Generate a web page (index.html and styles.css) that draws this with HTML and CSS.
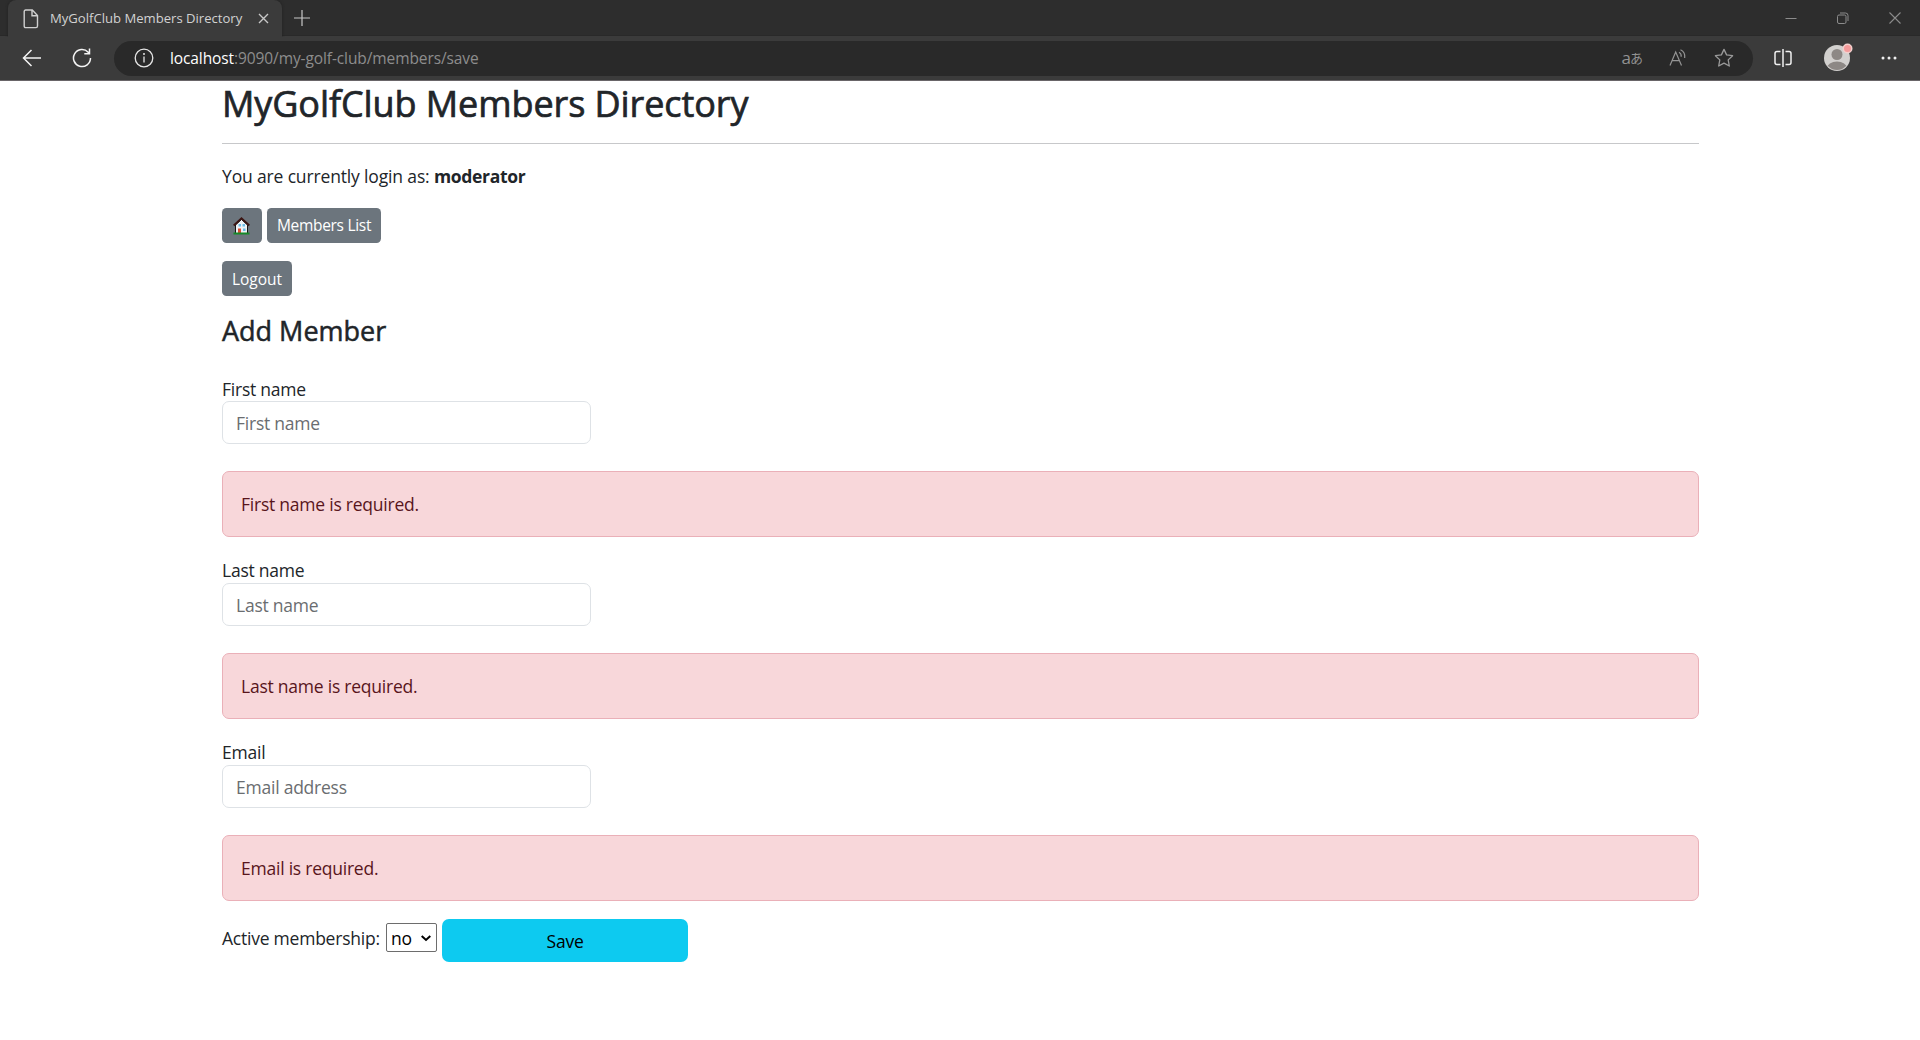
FILE: index.html
```html
<!DOCTYPE html>
<html lang="en">
<head>
<meta charset="utf-8">
<title>MyGolfClub Members Directory</title>
<link rel="stylesheet" href="styles.css">
</head>
<body>
<header class="browser">
  <div class="tabstrip">
    <div class="tab">
      <svg class="page-icon" width="16" height="20" viewBox="0 0 16 20" fill="none" stroke="#d0d0d0" stroke-width="1.4"><path d="M2.7 1H9.3L14.5 6.5V17Q14.5 18.6 12.9 18.6H2.7Q1.2 18.6 1.2 17V2.600Q1.200 1 2.700 1ZM9 1V6.800H14.500"/></svg>
      <span class="tab-title">MyGolfClub Members Directory</span>
      <svg class="tab-close" width="11" height="11" viewBox="0 0 11 11" stroke="#c8c8c8" stroke-width="1.400"><path d="M1 1L10 10M10 1L1 10"/></svg>
    </div>
    <svg class="new-tab" width="16" height="16" viewBox="0 0 16 16" stroke="#c8c8c8" stroke-width="1.200"><path d="M8 0V16M0 8H16"/></svg>
    <div class="window-buttons">
      <svg width="12" height="12" viewBox="0 0 12 12" stroke="#8c8c8c"><path d="M0.500 6.500H11.500"/></svg>
      <svg width="12" height="12" viewBox="0 0 12 12" fill="none" stroke="#8c8c8c"><rect x="0.500" y="3" width="8.500" height="8.500" rx="1.500"/><path d="M3 1H8.500Q11 1 11 3.500V9"/></svg>
      <svg width="12" height="12" viewBox="0 0 12 12" stroke="#8c8c8c" stroke-width="1.100"><path d="M0.500 0.500L11.500 11.500M11.500 0.500L0.500 11.500"/></svg>
    </div>
  </div>
  <div class="toolbar">
    <svg class="back" width="20" height="18" viewBox="0 0 20 18" fill="none" stroke="#f4f4f4" stroke-width="1.500"><path d="M19 9H1.500M9.500 1L1.500 9L9.500 17"/></svg>
    <svg class="reload" width="20" height="20" viewBox="0 0 20 20" fill="none" stroke="#f4f4f4" stroke-width="1.500"><path d="M18.500 10A8.500 8.500 0 1 1 16.200 4.200L17.300 5.500M17.500 0.500V5.700H12.300"/></svg>
    <div class="address">
      <svg class="info" width="20" height="20" viewBox="0 0 20 20" fill="none" stroke="#e6e6e6" stroke-width="1.300"><circle cx="10" cy="10" r="8.800"/><path d="M10 8.500V14.500"/><circle cx="10" cy="6" r=".4"/></svg>
      <span class="url"><span class="host">localhost</span>:9090/my-golf-club/members/save</span>
      <span class="translate">a<span class="kana">あ</span></span>
      <svg class="read" width="18" height="18" viewBox="0 0 18 18" fill="none" stroke="#949494" stroke-width="1.200"><path d="M1 16.500L6.700 3L12.500 16.500M3 11.700H10.500M10 3.200Q12.500 4.500 12.200 7.800M11.500 0.800Q16.500 3 15.700 9"/></svg>
      <svg class="star" width="20" height="20" viewBox="0 0 20 20" fill="none" stroke="#9a9a9a" stroke-width="1.300" stroke-linejoin="round"><path d="M10 1.400L12.600 6.900L18.600 7.700L14.200 11.900L15.300 18L10 15.100L4.700 18L5.800 11.900L1.400 7.700L7.400 6.900Z"/></svg>
    </div>
    <svg class="split" width="18" height="18" viewBox="0 0 18 18" fill="none" stroke="#f0f0f0" stroke-width="1.500"><path d="M9 0V18M6.500 2.500H3Q1 2.500 1 4.500V13.500Q1 15.500 3 15.500H6.500M11.500 2.500H15Q17 2.500 17 4.500V13.500Q17 15.500 15 15.500H11.500"/></svg>
    <svg class="avatar" width="29" height="28" viewBox="0 0 29 28"><defs><clipPath id="face"><circle cx="13" cy="15" r="12"/></clipPath></defs><circle cx="13" cy="15" r="13" fill="#d2d0ce"/><g clip-path="url(#face)" fill="#8d8885"><circle cx="13" cy="11.500" r="5.500"/><ellipse cx="13" cy="25" rx="10" ry="6.500"/></g><circle cx="23.500" cy="5.500" r="5" fill="#f3d0cd"/><circle cx="23.500" cy="5.500" r="3.500" fill="#f59a9a"/></svg>
    <svg class="dots" width="16" height="4" viewBox="0 0 16 4" fill="#f0f0f0"><circle cx="2" cy="2" r="1.500"/><circle cx="8" cy="2" r="1.500"/><circle cx="14" cy="2" r="1.500"/></svg>
  </div>
</header>
<main class="container">
  <h2 class="title">MyGolfClub Members Directory</h2>
  <hr class="rule">
  <p class="login">You are currently login as: <b>moderator</b></p>
  <div class="nav">
    <button class="btn home" aria-label="Home"><svg width="17" height="18" viewBox="0 0 17 18"><path d="M2.500 8V16.500H14.500V8L8.500 2.500Z" fill="#eef2f5" stroke="#171717"/><path d="M0.700 8.500L8.500 1.300L16.300 8.500" fill="none" stroke="#3c1513" stroke-width="1.800"/><path d="M5.500 7H8V9.500H5.500ZM9.500 7H12V9.500H9.500ZM10 11.500H12.500V14H10Z" fill="#6cbde8"/><path d="M5 11.500H8V16.500H5Z" fill="#de4b32"/><path d="M0.500 16.500H16.500" stroke="#168a28" stroke-width="2"/></svg></button>
    <button class="btn members">Members List</button>
  </div>
  <div class="nav"><button class="btn logout">Logout</button></div>
  <h4 class="subtitle">Add Member</h4>
  <form>
    <div class="field">
      <label for="first">First name</label>
      <input id="first" placeholder="First name">
      <div class="alert">First name is required.</div>
    </div>
    <div class="field">
      <label for="last">Last name</label>
      <input id="last" placeholder="Last name">
      <div class="alert">Last name is required.</div>
    </div>
    <div class="field">
      <label for="email">Email</label>
      <input id="email" placeholder="Email address">
      <div class="alert">Email is required.</div>
    </div>
    <div class="actions">
      <span class="active-label">Active membership:</span>
      <span class="select">no<svg width="10" height="7" viewBox="0 0 10 7" fill="none" stroke="#000" stroke-width="2"><path d="M0.700 1L5 5L9.300 1"/></svg></span>
      <button class="save" type="button">Save</button>
    </div>
  </form>
</main>
</body>
</html>
```
FILE: styles.css
```css
* { box-sizing: border-box; }
body { margin: 0; background: #fff; color: #212529; font-family: "Open Sans", "Noto Sans", sans-serif; font-size: 17.500px; line-height: 27px; }
svg { display: block; flex: none; }
.browser { height: 81px; background: #3b3b3b; border-bottom: 1px solid #696568; }
.tabstrip { height: 36px; background: #2d2d2d; display: flex; align-items: flex-start; padding-left: 8px; box-shadow: inset 0 -1px #292929; }
.tab { width: 274px; height: 37px; background: #3b3b3b; border-radius: 8px 8px 0 0; display: flex; align-items: center; padding-left: 15px; box-shadow: 0 0 3px #202020; clip-path: inset(0 -3px 0 -3px); }
.tab-title { width: 208px; margin-left: 11px; color: #d2d2d2; font-size: 13.100px; white-space: nowrap; }
.new-tab { margin: 10px 0 0 12px; }
.window-buttons { margin: 12px 19px 0 auto; display: flex; gap: 40px; }
.toolbar { height: 44px; display: flex; align-items: center; }
.back { margin-left: 22px; }
.reload { margin-left: 30px; }
.address { margin-left: 22px; width: 1639px; height: 35px; border-radius: 18px; background: #292929; display: flex; align-items: center; padding-left: 20px; }
.url { margin-left: 16px; color: #8d8d8d; font-size: 15.500px; letter-spacing: -0.100px; white-space: nowrap; }
.host { color: #fff; }
.translate { margin-left: auto; color: #929292; font-size: 17px; line-height: 20px; display: flex; align-items: center; }
.kana { font-family: "Noto Sans CJK JP", sans-serif; font-size: 13px; margin-left: -1px; }
.read { margin-left: 26px; }
.star { margin: 0 19px 0 27px; }
.split { margin-left: 21px; }
.avatar { margin: 0 0 3px 32px; }
.dots { margin-left: 28px; }
.container { width: 1477px; margin-left: 222px; letter-spacing: -0.230px; }
.title, .subtitle { letter-spacing: -0.080px; font-weight: 500; }
.title { margin: 0; padding-top: 1px; height: 62px; font-size: 36px; line-height: 44px; -webkit-text-stroke: 0.700px; }
.rule { margin: 0; border: 0; height: 1px; background: #c7c8ca; }
.login { margin: 19px 0 18px; letter-spacing: -0.150px; }
.login b { letter-spacing: -0.320px; }
.nav { display: flex; gap: 5px; margin-bottom: 18px; }
.btn { height: 35px; border: 0; border-radius: 4.500px; background: #6c757d; color: #fff; font: 400 15.500px/35px "Open Sans", sans-serif; padding: 0; }
.home { width: 40px; padding-left: 11px; }
.members { width: 114px; letter-spacing: -0.300px; }
.logout { width: 70px; padding-top: 1px; }
.subtitle { margin: 0 0 28px; font-size: 27px; line-height: 33px; letter-spacing: 0; -webkit-text-stroke: 0.500px; }
.field { height: 182px; }
.field:nth-child(3) { height: 180px; }
.field label { display: block; height: 26px; }
.field input { display: block; width: 369px; height: 43px; margin-bottom: 27px; border: 1px solid #dee2e6; border-radius: 7px; padding: 0 13px; font: inherit; letter-spacing: inherit; }
.field input::placeholder { color: #6a6d70; }
.field:first-child label { padding-top: 1px; }
.alert { height: 66px; border: 1px solid #eab0b8; border-radius: 7px; background: #f8d7da; color: #58151c; padding: 19px 18px; }
.actions { display: flex; align-items: flex-start; gap: 5px; }
.active-label { width: 159px; margin-top: 6px; white-space: nowrap; }
.select { width: 51px; height: 29px; margin-top: 4px; border: 1px solid #6d6d6d; border-radius: 2px; display: flex; align-items: center; justify-content: space-between; padding: 1px 5px 0 4px; color: #000; }
.save { width: 246px; height: 43px; padding: 2px 0 0; border: 0; border-radius: 7px; background: #0dcaf0; color: #000; font: inherit; letter-spacing: inherit; }
```
